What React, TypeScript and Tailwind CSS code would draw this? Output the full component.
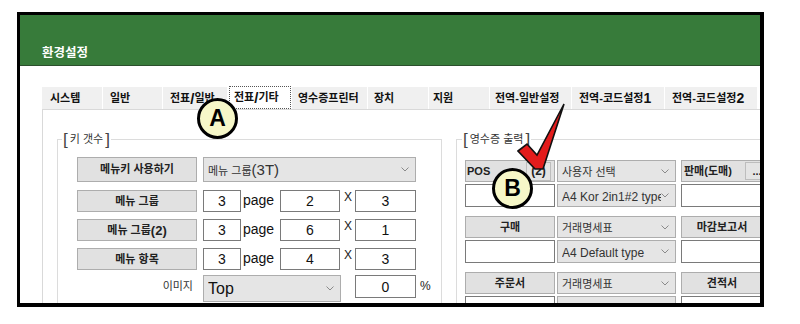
import React from "react";

const Chevron = () => (
  <svg width="8" height="5" viewBox="0 0 8 5" className="shrink-0">
    <path d="M0.5 0.5 L4 4 L7.5 0.5" fill="none" stroke="#8a8a8a" strokeWidth="1" />
  </svg>
);

const Btn = ({ children, className = "" }: { children: React.ReactNode; className?: string }) => (
  <div className={`flex items-center justify-center border border-[#adadad] bg-[#e1e1e1] text-[11px] font-bold text-[#222] leading-none ${className}`}>
    {children}
  </div>
);

const Select = ({ children, className = "" }: { children: React.ReactNode; className?: string }) => (
  <div className={`flex items-center border border-[#adadad] bg-[#e5e5e5] pl-[4px] pr-[6px] text-[#333] ${className}`}>
    <div className="flex-1 overflow-hidden whitespace-nowrap leading-none">{children}</div>
    <Chevron />
  </div>
);

const Input = ({ value, className = "" }: { value?: string; className?: string }) => (
  <div className={`flex items-center justify-center border border-[#7a7a7a] bg-white text-[14px] text-[#111] leading-none ${className}`}>
    {value}
  </div>
);

const tabs = [
  { key: "sys", w: "w-[61px]", pl: "pl-[8px]", label: <>시스템</> },
  { key: "gen", w: "w-[60px]", pl: "pl-[7px]", label: <>일반</> },
  { key: "slip1", w: "w-[65px]", pl: "pl-[7px]", label: <>전표<span className="text-[15px] font-bold">/</span>일반</> },
  { key: "slip2", w: "w-[64px]", pl: "pl-[4px]", label: <>전표<span className="text-[15px] font-bold">/</span>기타</>, active: true },
  { key: "rcpt", w: "w-[76px]", pl: "pl-[6px]", label: <>영수증프린터</> },
  { key: "dev", w: "w-[61px]", pl: "pl-[6px]", label: <>장치</> },
  { key: "sup", w: "w-[61px]", pl: "pl-[4px]", label: <>지원</> },
  { key: "g1", w: "w-[82px]", pl: "pl-[5px]", label: <>전역-일반설정</> },
  { key: "g2", w: "w-[93px]", pl: "pl-[7px]", label: <>전역-코드설정<span className="text-[14px]">1</span></> },
  { key: "g3", w: "w-[93px]", pl: "pl-[7px]", label: <>전역-코드설정<span className="text-[14px]">2</span></> },
];

const pageRows = [
  { label: <>메뉴 그룹</>, a: "3", b: "2", c: "3" },
  { label: <>메뉴 그룹<span className="text-[13px]">(2)</span></>, a: "3", b: "6", c: "1" },
  { label: <>메뉴 항목</>, a: "3", b: "4", c: "3" },
];

const printRows = [
  { left: "구매", sel1: "거래명세표", sel2: "A4 Default type", right: "마감보고서" },
  { left: "주문서", sel1: "거래명세표", sel2: "A4 Default Type", right: "견적서" },
];

export default function App() {
  return (
    <div className="relative w-[800px] h-[324px] overflow-hidden bg-white font-['Liberation_Sans','Noto_Sans_CJK_KR',sans-serif]">
      {/* window frame */}
      <div className="ml-[17px] mt-[12px] w-[747px] h-[295px] border-[3px] border-r-4 border-b-4 border-black overflow-hidden flex flex-col">
        <div className="h-[51px] shrink-0 bg-[#377b3a] border-b border-[#2b4f2c] pl-[22px] pt-[25px]">
          <span className="text-[12.5px] font-bold text-white leading-[16px]">환경설정</span>
        </div>

        <div className="flex-1 pl-[22px] pt-[21px] bg-white">
          {/* tab strip */}
          <div className="flex items-end h-[22px] w-[800px]">
            {tabs.map((t) =>
              t.active ? (
                <div key={t.key} className={`${t.w} h-[24px] bg-white flex items-center pl-[1px] pr-[1px]`}>
                  <div className={`w-full h-[23px] border border-dotted border-[#555] ${t.pl} flex items-center text-[11px] font-bold text-[#111] whitespace-nowrap leading-none`}>
                    {t.label}
                  </div>
                </div>
              ) : (
                <div key={t.key} className={`${t.w} h-[22px] bg-[#f0f0f0] border-r border-white ${t.pl} flex items-center text-[11px] font-bold text-[#111] whitespace-nowrap leading-none`}>
                  {t.label}
                </div>
              )
            )}
          </div>

          {/* tab page */}
          <div className="h-[200px] w-[800px] border-l border-t border-[#d9d9d9] flex pl-[14px] pt-[29px]">
            {/* left group */}
            <div className="relative w-[385px] h-[200px] border border-[#dcdcdc] pl-[19px] pt-[17px] shrink-0">
              <div className="absolute -top-[9px] left-[4px] bg-white px-[1px] flex items-center text-[11px] text-[#333] leading-none">
                <span className="text-[17px] font-light text-[#444]">[</span>
                <span className="mx-[2px]">키 갯수</span>
                <span className="text-[17px] font-light text-[#444]">]</span>
              </div>

              <div className="flex h-[25px]">
                <Btn className="w-[120px]">메뉴키 사용하기</Btn>
                <Select className="ml-[6px] w-[213px]">
                  <span className="text-[11px]">메뉴 그룹</span>
                  <span className="text-[15px]">(3T)</span>
                </Select>
              </div>

              {pageRows.map((r, i) => (
                <div key={i} className={`flex h-[22px] ${i === 0 ? "mt-[8px]" : "mt-[7px]"}`}>
                  <Btn className="w-[120px]">{r.label}</Btn>
                  <Input value={r.a} className="ml-[6px] w-[38px]" />
                  <span className="w-[39px] pl-[2px] text-[14px] text-[#111] leading-[20px]">page</span>
                  <Input value={r.b} className="w-[60px]" />
                  <span className="w-[15px] pl-[4px] text-[12px] text-[#222] leading-[14px]">X</span>
                  <Input value={r.c} className="w-[61px]" />
                </div>
              ))}

              <div className="flex items-start mt-[5px]">
                <div className="w-[120px] h-[23px] flex items-center justify-end pr-[4px] text-[11px] text-[#333]">이미지</div>
                <Select className="ml-[6px] w-[138px] h-[27px]">
                  <span className="text-[16px] text-[#111]">Top</span>
                </Select>
                <Input value="0" className="ml-[14px] w-[61px] h-[23px]" />
                <span className="ml-[4px] text-[12px] text-[#222] leading-[23px]">%</span>
              </div>
            </div>

            {/* right group */}
            <div className="relative ml-[14px] w-[360px] h-[200px] border border-[#dcdcdc] pl-[8px] pt-[20px] shrink-0">
              <div className="absolute -top-[9px] left-[5px] bg-white px-[1px] flex items-center text-[11px] text-[#333] leading-none">
                <span className="text-[17px] font-light text-[#444]">[</span>
                <span className="mx-[2px]">영수증 출력</span>
                <span className="text-[17px] font-light text-[#444]">]</span>
              </div>

              <div className="flex h-[22px]">
                <div className="w-[90px] h-full border border-[#adadad] bg-[#e1e1e1] flex items-center justify-between pl-[1px] pr-[3px] text-[11px] font-bold text-[#222]">
                  <span>POS</span>
                  <div className="w-[25px] h-[19px] border border-[#bdbdbd] bg-[#e4e4e4] flex items-center justify-center text-[12px] font-bold">(2)</div>
                </div>
                <Select className="ml-[2px] w-[119px]">
                  <span className="text-[11px]">사용자 선택</span>
                </Select>
                <div className="ml-[5px] w-[100px] h-full border border-[#adadad] bg-[#e1e1e1] flex items-center pl-[2px] text-[11px] font-bold text-[#222]">
                  <span className="w-[60px] whitespace-nowrap">판매(도매)</span>
                  <div className="ml-[1px] w-[24px] h-[18px] border border-[#bdbdbd] bg-[#e4e4e4] flex items-center justify-center text-[11px] font-bold">...</div>
                </div>
              </div>
              <div className="flex h-[23px] mt-[2px]">
                <Input className="w-[90px]" />
                <Select className="ml-[2px] w-[119px]">
                  <span className="text-[12px]">A4 Kor 2in1#2 type</span>
                </Select>
                <Input className="ml-[5px] w-[100px]" />
              </div>

              {printRows.map((r, i) => (
                <div key={i} className="mt-[9px]">
                  <div className="flex h-[22px]">
                    <Btn className="w-[90px]">{r.left}</Btn>
                    <Select className="ml-[2px] w-[119px]">
                      <span className="text-[11px]">{r.sel1}</span>
                    </Select>
                    <Btn className="ml-[5px] w-[100px] pr-[18px]">{r.right}</Btn>
                  </div>
                  <div className="flex h-[23px] mt-[2px]">
                    <Input className="w-[90px]" />
                    <Select className="ml-[2px] w-[119px]">
                      <span className="text-[12px]">{r.sel2}</span>
                    </Select>
                    <Input className="ml-[5px] w-[100px]" />
                  </div>
                </div>
              ))}
            </div>
          </div>
        </div>
      </div>

      {/* callouts */}
      <div className="absolute left-[197px] top-[98px] w-[41px] h-[41px] rounded-full border-[3px] border-black bg-[#f6f7c8] flex items-center justify-center text-[23px] font-bold text-black leading-none">
        A
      </div>
      <div className="absolute left-[492px] top-[168px] w-[41px] h-[41px] rounded-full border-[3px] border-black bg-[#f6f7c8] flex items-center justify-center text-[23px] font-bold text-black leading-none">
        B
      </div>
      <svg className="absolute left-0 top-0" width="800" height="324" viewBox="0 0 800 324">
        <polygon
          points="518,151 527,144 537,155 564,104 543,169 535,169"
          fill="#e31c1c"
          stroke="#111"
          strokeWidth="1.6"
          strokeLinejoin="miter"
        />
      </svg>
    </div>
  );
}
